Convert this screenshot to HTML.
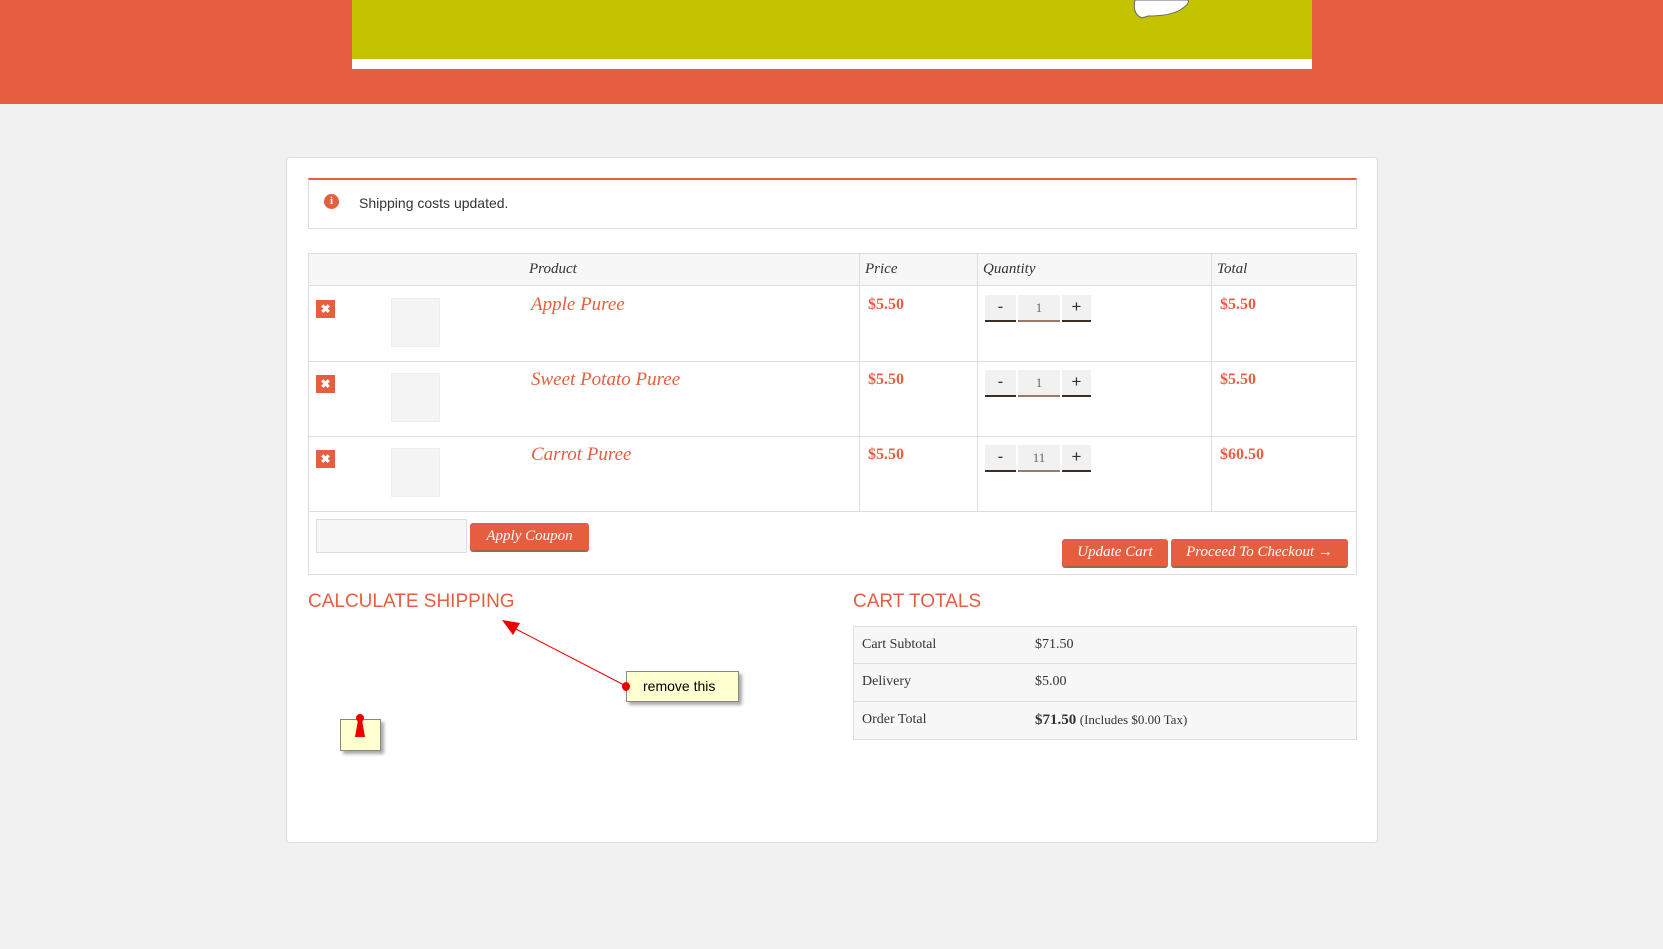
<!DOCTYPE html>
<html><head><meta charset="utf-8"><style>
*{box-sizing:border-box;margin:0;padding:0}
body{width:1663px;height:949px;background:#f1f1f1;position:relative;overflow:hidden;font-family:"Liberation Serif",serif}
.a{position:absolute}
.hdr{left:0;top:0;width:1663px;height:104px;background:#e55e3f}
.green{left:352px;top:0;width:960px;height:59px;background:#c3c300}
.wstrip{left:352px;top:59px;width:960px;height:10px;background:#fff}
.cont{left:286px;top:157px;width:1092px;height:686px;background:#fff;border:1px solid #ddd;border-radius:4px}
.notice{left:308px;top:178px;width:1049px;height:51px;border:1px solid #ddd;border-top:2px solid #e55e3f}
.cell{position:absolute;border:1px solid #ddd}
.th{font-style:italic;font-size:15px;color:#333}
.red{color:#e55e3f}
.x{width:19px;height:18px;background:#e55e3f;color:#fff;font-size:12px;font-weight:bold;text-align:center;line-height:18px;font-family:"Liberation Sans",sans-serif}
.thumb{width:49px;height:49px;background:#f4f4f4;border:1px solid #eee}
.pn{font-style:italic;font-size:19px;color:#e55e3f}
.pr{font-size:16px;font-weight:bold;color:#e55e3f}
.qb{height:27px;background:#f1f1f1;text-align:center;font-family:"Liberation Sans",sans-serif;font-size:17px;color:#333;line-height:24px;border-bottom:2px solid #3b2e25}
.btn{background:#e55e3f;color:#fff;font-style:italic;font-size:15px;text-align:center;border-radius:3px;border-bottom:2px solid #9a6a50}
h3{position:absolute;font-family:"Liberation Sans",sans-serif;font-weight:normal;font-size:19px;color:#e55e3f}
.tr{position:absolute;left:853px;width:504px;height:38px;background:#f7f7f7;border:1px solid #ddd;font-size:14px;color:#333;line-height:36px}
</style></head><body>
<div class="a hdr"></div><div class="a green"></div><div class="a wstrip"></div>
<svg class="a" style="left:1130px;top:0" width="80" height="22"><path d="M5 0 Q2 14 12 18 L18 16 Q40 16 50 10 Q60 4 58 0Z" fill="#fff" stroke="#666"/></svg>
<div class="a cont"></div>
<div class="a notice"></div>
<div class="a" style="left:324px;top:194px;width:15px;height:15px;border-radius:50%;background:#e55e3f;color:#fff;font:bold 11px 'Liberation Serif';text-align:center;line-height:15px">i</div>
<div class="a" style="left:359px;top:195px;font:14px 'Liberation Sans',sans-serif;color:#333">Shipping costs updated.</div>

<div class="cell" style="left:308px;top:253px;width:1049px;height:322px"></div>
<div class="a" style="left:309px;top:254px;width:1047px;height:32px;background:#f7f7f7;border-bottom:1px solid #ddd"></div>
<div class="a" style="left:309px;top:361px;width:1047px;border-top:1px solid #ddd"></div>
<div class="a" style="left:309px;top:436px;width:1047px;border-top:1px solid #ddd"></div>
<div class="a" style="left:309px;top:511px;width:1047px;border-top:1px solid #ddd"></div>
<div class="a" style="left:859px;top:254px;height:257px;border-left:1px solid #ddd"></div>
<div class="a" style="left:977px;top:254px;height:257px;border-left:1px solid #ddd"></div>
<div class="a" style="left:1211px;top:254px;height:257px;border-left:1px solid #ddd"></div>
<div class="a th" style="left:529px;top:261px">Product</div>
<div class="a th" style="left:865px;top:261px">Price</div>
<div class="a th" style="left:983px;top:261px">Quantity</div>
<div class="a th" style="left:1217px;top:261px">Total</div>

<div class="a x" style="left:316px;top:300px">✖</div><div class="a thumb" style="left:391px;top:298px"></div>
<div class="a pn" style="left:531px;top:294px">Apple Puree</div><div class="a pr" style="left:868px;top:296px">$5.50</div>
<div class="a qb" style="left:985px;top:295px;width:31px">-</div><div class="a qb" style="left:1018px;top:295px;width:42px;font:13px 'Liberation Serif';line-height:26px;color:#666;border-bottom-color:#9a7a65">1</div><div class="a qb" style="left:1062px;top:295px;width:29px">+</div>
<div class="a pr" style="left:1220px;top:296px">$5.50</div>

<div class="a x" style="left:316px;top:375px">✖</div><div class="a thumb" style="left:391px;top:373px"></div>
<div class="a pn" style="left:531px;top:369px">Sweet Potato Puree</div><div class="a pr" style="left:868px;top:371px">$5.50</div>
<div class="a qb" style="left:985px;top:370px;width:31px">-</div><div class="a qb" style="left:1018px;top:370px;width:42px;font:13px 'Liberation Serif';line-height:26px;color:#666;border-bottom-color:#9a7a65">1</div><div class="a qb" style="left:1062px;top:370px;width:29px">+</div>
<div class="a pr" style="left:1220px;top:371px">$5.50</div>

<div class="a x" style="left:316px;top:450px">✖</div><div class="a thumb" style="left:391px;top:448px"></div>
<div class="a pn" style="left:531px;top:444px">Carrot Puree</div><div class="a pr" style="left:868px;top:446px">$5.50</div>
<div class="a qb" style="left:985px;top:445px;width:31px">-</div><div class="a qb" style="left:1018px;top:445px;width:42px;font:13px 'Liberation Serif';line-height:26px;color:#666;border-bottom-color:#9a7a65">11</div><div class="a qb" style="left:1062px;top:445px;width:29px">+</div>
<div class="a pr" style="left:1220px;top:446px">$60.50</div>

<div class="a" style="left:316px;top:519px;width:151px;height:34px;background:#f7f7f7;border:1px solid #ddd"></div>
<div class="a btn" style="left:470px;top:523px;width:119px;height:29px;line-height:27px">Apply Coupon</div>
<div class="a btn" style="left:1062px;top:539px;width:106px;height:29px;line-height:27px">Update Cart</div>
<div class="a btn" style="left:1171px;top:539px;width:177px;height:29px;line-height:27px">Proceed To Checkout →</div>

<h3 style="left:308px;top:591px">CALCULATE SHIPPING</h3>
<h3 style="left:853px;top:591px">CART TOTALS</h3>
<div class="tr" style="top:626px"><span style="position:absolute;left:8px">Cart Subtotal</span><span style="position:absolute;left:181px">$71.50</span></div>
<div class="tr" style="top:664px;height:38px;border-top:none"><span style="position:absolute;left:8px">Delivery</span><span style="position:absolute;left:181px">$5.00</span></div>
<div class="tr" style="top:702px;border-top:none"><span style="position:absolute;left:8px">Order Total</span><span style="position:absolute;left:181px"><b style="font-size:15px">$71.50</b> <span style="font-size:13px">(Includes $0.00 Tax)</span></span></div>

<svg class="a" style="left:0;top:0" width="1663" height="949">
<line x1="626" y1="686" x2="512" y2="627" stroke="#e00" stroke-width="1"/>
<polygon points="502,620 520,623 513,635" fill="#e00"/>
</svg>
<div class="a" style="left:626px;top:671px;width:113px;height:31px;background:#ffffd0;border:1px solid #888;box-shadow:3px 3px 3px #aaa;font:14px 'Liberation Sans',sans-serif;line-height:29px;padding-left:16px;color:#000">remove this</div>
<div class="a" style="left:622px;top:682px;width:8px;height:9px;border-radius:50%;background:#e00"></div>
<div class="a" style="left:340px;top:719px;width:41px;height:32px;background:#ffffd0;border:1px solid #888;box-shadow:3px 3px 3px #aaa"></div>
<svg class="a" style="left:350px;top:713px" width="20" height="26"><circle cx="10" cy="5" r="4" fill="#e00"/><polygon points="8,7 12,7 15,24 5,24" fill="#e00"/></svg>
</body></html>
